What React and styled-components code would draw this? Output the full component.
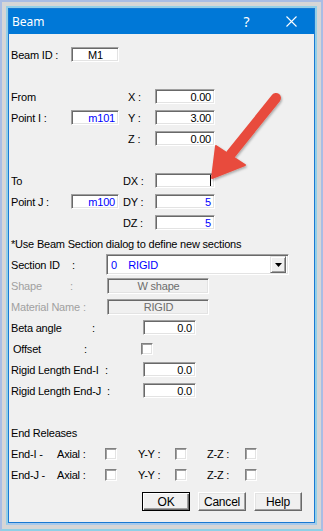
import styled, { createGlobalStyle } from "styled-components";

const Global = createGlobalStyle`
  html, body {
    margin: 0;
    padding: 0;
    background: #d6d6d6;
  }
  * {
    box-sizing: border-box;
  }
`;

const Desk = styled.div`
  position: relative;
  width: 323px;
  height: 531px;
  border: 2px solid #a9bde4;
  border-bottom-color: #8fd0e6;
  background: #d6d6d6;
  padding: 4px;
`;

const Glow = styled.div`
  height: 100%;
  border: 2px solid #92cfe8;
  border-bottom-color: #a8c9ea;
`;

const Window = styled.div`
  height: 100%;
  border: 1px solid #1979d2;
  background: #f0f0f0;
  display: flex;
  flex-direction: column;
  font-family: "Liberation Sans", Arial, sans-serif;
  font-size: 11px;
  letter-spacing: -0.2px;
  color: #000;
`;

const TitleBar = styled.div`
  height: 25px;
  background: #0078d7;
  color: #fff;
  display: flex;
  align-items: center;
  padding: 0 0 0 3px;
  font-family: "Noto Sans", "Open Sans", sans-serif;
  font-size: 12px;
  letter-spacing: 0;
`;

const Title = styled.div`
  flex: 1;
  padding-bottom: 1px;
`;

const TitleBtn = styled.div`
  width: 45px;
  height: 25px;
  display: flex;
  align-items: center;
  justify-content: center;
  font-size: 14px;
`;

const Body = styled.div`
  padding: 10px 12px 0 2px;
  display: flex;
  flex-direction: column;
`;

const Row = styled.div`
  height: 21px;
  display: flex;
  align-items: center;
  white-space: pre;
`;

const Cell = styled.div`
  width: ${(p) => p.w}px;
  flex: none;
  padding-left: ${(p) => p.pl || 0}px;
  color: ${(p) => (p.dim ? "#a0a0a0" : "inherit")};
  display: flex;
  align-items: center;
`;

const LabelText = styled.span`
  display: inline-block;
  width: ${(p) => p.w}px;
  overflow: visible;
`;

const Edit = styled.div`
  width: ${(p) => p.w}px;
  height: ${(p) => p.h || 15}px;
  flex: none;
  background: ${(p) => (p.disabled ? "#f0f0f0" : "#fff")};
  border: 1px solid;
  border-color: #a0a0a0 #fff #fff #a0a0a0;
  box-shadow: inset 1px 1px #696969, inset -1px -1px #e3e3e3;
  display: flex;
  align-items: center;
  justify-content: ${(p) =>
    p.align === "center" ? "center" : p.align === "left" ? "flex-start" : "flex-end"};
  padding: 0 3px 0 4px;
  color: ${(p) => (p.blue ? "#0000ff" : p.disabled ? "#6d6d6d" : "#000")};
`;

const Caret = styled.span`
  width: 1px;
  height: 11px;
  background: #000;
`;

const Select = styled(Edit)`
  height: 21px;
  padding: 0 2px 0 4px;
  justify-content: space-between;
`;

const DropBtn = styled.div`
  width: 16px;
  height: 17px;
  background: #f0f0f0;
  border: 1px solid;
  border-color: #e3e3e3 #696969 #696969 #e3e3e3;
  box-shadow: inset 1px 1px #fff, inset -1px -1px #a0a0a0;
  display: flex;
  align-items: center;
  justify-content: center;
`;

const Check = styled.div`
  width: 12px;
  height: 12px;
  flex: none;
  background: #fff;
  border: 1px solid;
  border-color: #808080 #fff #fff #808080;
  box-shadow: inset 1px 1px #a0a0a0, inset -1px -1px #e3e3e3;
`;

const Buttons = styled.div`
  display: flex;
  justify-content: flex-end;
  gap: 8px;
  margin-top: 7px;
`;

const Button = styled.div`
  width: 48px;
  height: 19px;
  background: #f0f0f0;
  border: 1px solid;
  border-color: ${(p) => (p.primary ? "#000" : "#fff #696969 #696969 #fff")};
  box-shadow: ${(p) =>
    p.primary
      ? "inset 1px 1px #fff, inset -1px -1px #696969, inset -2px -2px #a0a0a0"
      : "inset -1px -1px #a0a0a0, inset 1px 1px #e3e3e3"};
  display: flex;
  align-items: center;
  justify-content: center;
  font-size: 12px;
`;

const Arrow = styled.svg`
  position: absolute;
  left: 0;
  top: 0;
  pointer-events: none;
`;

function Label({ text, colon, w, dim, pl }) {
  return (
    <Cell w={w} dim={dim} pl={pl}>
      <LabelText w={colon - (pl || 0)}>{text}</LabelText>:
    </Cell>
  );
}

export default function App() {
  return (
    <>
      <Global />
      <Desk>
        <Glow>
          <Window>
            <TitleBar>
              <Title>Beam</Title>
              <TitleBtn>?</TitleBtn>
              <TitleBtn>
                <svg width="11" height="11" viewBox="0 0 11 11">
                  <path d="M0.5 0.5 L10.5 10.5 M10.5 0.5 L0.5 10.5" stroke="#fff" strokeWidth="1.1" />
                </svg>
              </TitleBtn>
            </TitleBar>
            <Body>
              <Row>
                <Cell w={60}>Beam ID :</Cell>
                <Edit w={48} align="center">M1</Edit>
              </Row>
              <Row />
              <Row>
                <Cell w={60}>From</Cell>
                <Cell w={48} />
                <Cell w={36} pl={9}>X :</Cell>
                <Edit w={60}>0.00</Edit>
              </Row>
              <Row>
                <Cell w={60}>Point I :</Cell>
                <Edit w={48} blue>m101</Edit>
                <Cell w={36} pl={9}>Y :</Cell>
                <Edit w={60}>3.00</Edit>
              </Row>
              <Row>
                <Cell w={108} />
                <Cell w={36} pl={9}>Z :</Cell>
                <Edit w={60}>0.00</Edit>
              </Row>
              <Row />
              <Row>
                <Cell w={60}>To</Cell>
                <Cell w={48} />
                <Cell w={36} pl={4}>DX :</Cell>
                <Edit w={60}>
                  <Caret />
                </Edit>
              </Row>
              <Row>
                <Cell w={60}>Point J :</Cell>
                <Edit w={48} blue>m100</Edit>
                <Cell w={36} pl={4}>DY :</Cell>
                <Edit w={60} blue>5</Edit>
              </Row>
              <Row>
                <Cell w={108} />
                <Cell w={36} pl={4}>DZ :</Cell>
                <Edit w={60} blue>5</Edit>
              </Row>
              <Row>*Use Beam Section dialog to define new sections</Row>
              <Row>
                <Label text="Section ID" colon={61} w={95} />
                <Select w={183} align="left" blue>
                  <span>0    RIGID</span>
                  <DropBtn>
                    <svg width="7" height="4" viewBox="0 0 7 4">
                      <path d="M0 0 H7 L3.5 4 Z" fill="#000" />
                    </svg>
                  </DropBtn>
                </Select>
              </Row>
              <Row>
                <Label text="Shape" colon={59} w={96} dim />
                <Edit w={102} h={16} align="center" disabled>W shape</Edit>
              </Row>
              <Row>
                <Label text="Material Name" colon={72} w={96} dim />
                <Edit w={102} h={16} align="center" disabled>RIGID</Edit>
              </Row>
              <Row>
                <Label text="Beta angle" colon={81} w={132} />
                <Edit w={53}>0.0</Edit>
              </Row>
              <Row>
                <Label text="Offset" colon={73} w={130} pl={2} />
                <Check />
              </Row>
              <Row>
                <Label text="Rigid Length End-I" colon={94} w={132} />
                <Edit w={53}>0.0</Edit>
              </Row>
              <Row>
                <Label text="Rigid Length End-J" colon={96} w={132} />
                <Edit w={53}>0.0</Edit>
              </Row>
              <Row />
              <Row>End Releases</Row>
              {["End-I -", "End-J -"].map((end) => (
                <Row key={end}>
                  <Cell w={46}>{end}</Cell>
                  <Cell w={48}>Axial :</Cell>
                  <Cell w={33}>
                    <Check />
                  </Cell>
                  <Cell w={37}>Y-Y :</Cell>
                  <Cell w={32}>
                    <Check />
                  </Cell>
                  <Cell w={38}>Z-Z :</Cell>
                  <Check />
                </Row>
              ))}
              <Buttons>
                <Button primary>OK</Button>
                <Button>Cancel</Button>
                <Button>Help</Button>
              </Buttons>
            </Body>
          </Window>
        </Glow>
        <Arrow width="323" height="531" viewBox="0 0 323 531">
          <defs>
            <filter id="sh" x="-20%" y="-20%" width="140%" height="140%">
              <feDropShadow dx="1" dy="1.5" stdDeviation="1.2" floodColor="#000" floodOpacity="0.3" />
            </filter>
          </defs>
          <g filter="url(#sh)" fill="#e84c3d" stroke="#e84c3d">
            <line x1="274" y1="96" x2="229" y2="152" strokeWidth="10" strokeLinecap="round" />
            <path d="M210 176 L214 144 L243 163 Z" strokeWidth="2" strokeLinejoin="round" />
          </g>
        </Arrow>
      </Desk>
    </>
  );
}
